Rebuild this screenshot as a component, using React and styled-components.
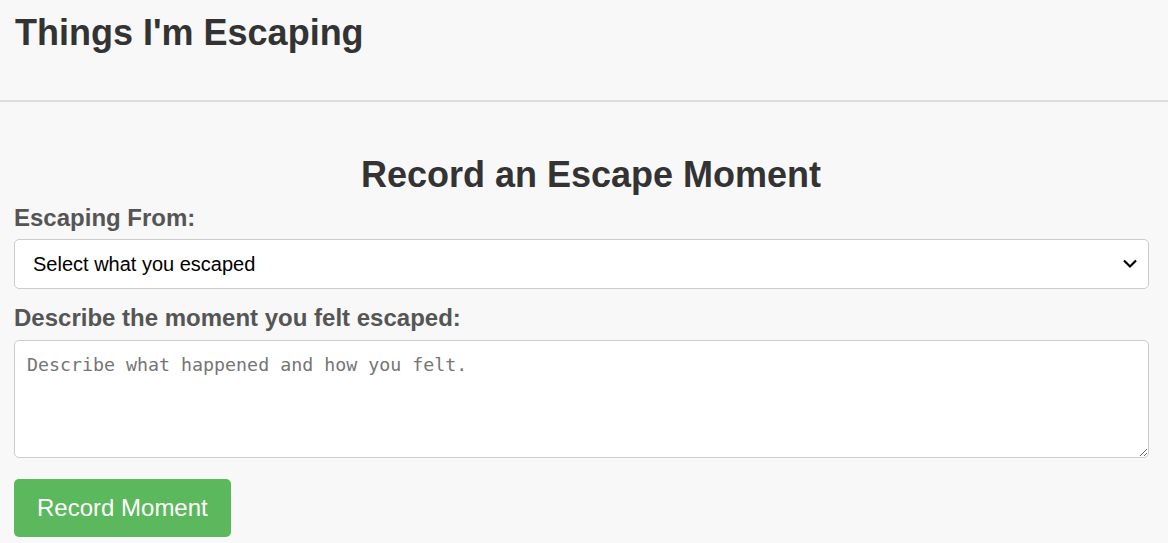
import React from "react";
import styled, { createGlobalStyle } from "styled-components";

const Global = createGlobalStyle`
  html, body { margin: 0; padding: 0; background: #f8f8f8; }
  body { font-family: "Liberation Sans", Arial, sans-serif; color: #333; }
  * { box-sizing: border-box; }
`;

const Header = styled.header`
  padding: 12px 15px 0 15px;
  height: 102px;
  border-bottom: 2px solid #ddd;
`;

const Title = styled.h1`
  margin: 0;
  font-size: 36px;
  line-height: 41px;
  font-weight: bold;
  color: #333;
`;

const Section = styled.section`
  padding: 52px 0 20px 14px;
`;

const SectionTitle = styled.h2`
  margin: 0 0 9px 0;
  font-size: 36px;
  line-height: 41px;
  font-weight: bold;
  text-align: center;
  color: #333;
`;

const Form = styled.form`
  display: flex;
  flex-direction: column;
  align-items: stretch;
  margin-right: 19px;
`;

const Label = styled.label`
  display: block;
  font-size: 24px;
  line-height: 28px;
  font-weight: bold;
  color: #555;
  margin-bottom: ${(p) => p.$gap}px;
`;

const SelectWrap = styled.div`
  position: relative;
  margin-bottom: 15px;
`;

const Select = styled.select`
  appearance: none;
  -webkit-appearance: none;
  display: block;
  width: 100%;
  height: 50px;
  padding: 0 40px 0 18px;
  font-family: "Liberation Sans", Arial, sans-serif;
  font-size: 20px;
  color: #000;
  background: #fff;
  border: 1px solid #ccc;
  border-radius: 5px;
  outline: none;
`;

const Chevron = styled.svg`
  position: absolute;
  right: 7px;
  top: 18px;
  pointer-events: none;
`;

const TextArea = styled.textarea`
  display: block;
  width: 100%;
  height: 118px;
  padding: 13px 12px 12px 12px;
  font-family: "DejaVu Sans Mono", "Liberation Mono", monospace;
  font-size: 18.3px;
  color: #000;
  background: #fff;
  border: 1px solid #ccc;
  border-radius: 5px;
  outline: none;
  margin: 0 0 21px 0;
  &::placeholder { color: #757575; }
`;

const Button = styled.button`
  align-self: flex-start;
  padding: 0 23px;
  height: 58px;
  background: #5cb85c;
  color: #fff;
  border: none;
  border-radius: 5px;
  font-family: "Liberation Sans", Arial, sans-serif;
  font-size: 24px;
  cursor: pointer;
`;

export default function App() {
  return (
    <>
      <Global />
      <Header>
        <Title>Things I'm Escaping</Title>
      </Header>
      <Section>
        <SectionTitle>Record an Escape Moment</SectionTitle>
        <Form onSubmit={(e) => e.preventDefault()}>
          <Label htmlFor="from" $gap={7}>Escaping From:</Label>
          <SelectWrap>
            <Select id="from" defaultValue="">
              <option value="">Select what you escaped</option>
            </Select>
            <Chevron width="24" height="14" viewBox="0 0 24 14">
              <path d="M6 3.5 L12 9.5 L18 3.5" fill="none" stroke="#000" strokeWidth="2.2" />
            </Chevron>
          </SelectWrap>
          <Label htmlFor="desc" $gap={8}>Describe the moment you felt escaped:</Label>
          <TextArea id="desc" placeholder="Describe what happened and how you felt." />
          <Button type="submit">Record Moment</Button>
        </Form>
      </Section>
    </>
  );
}
